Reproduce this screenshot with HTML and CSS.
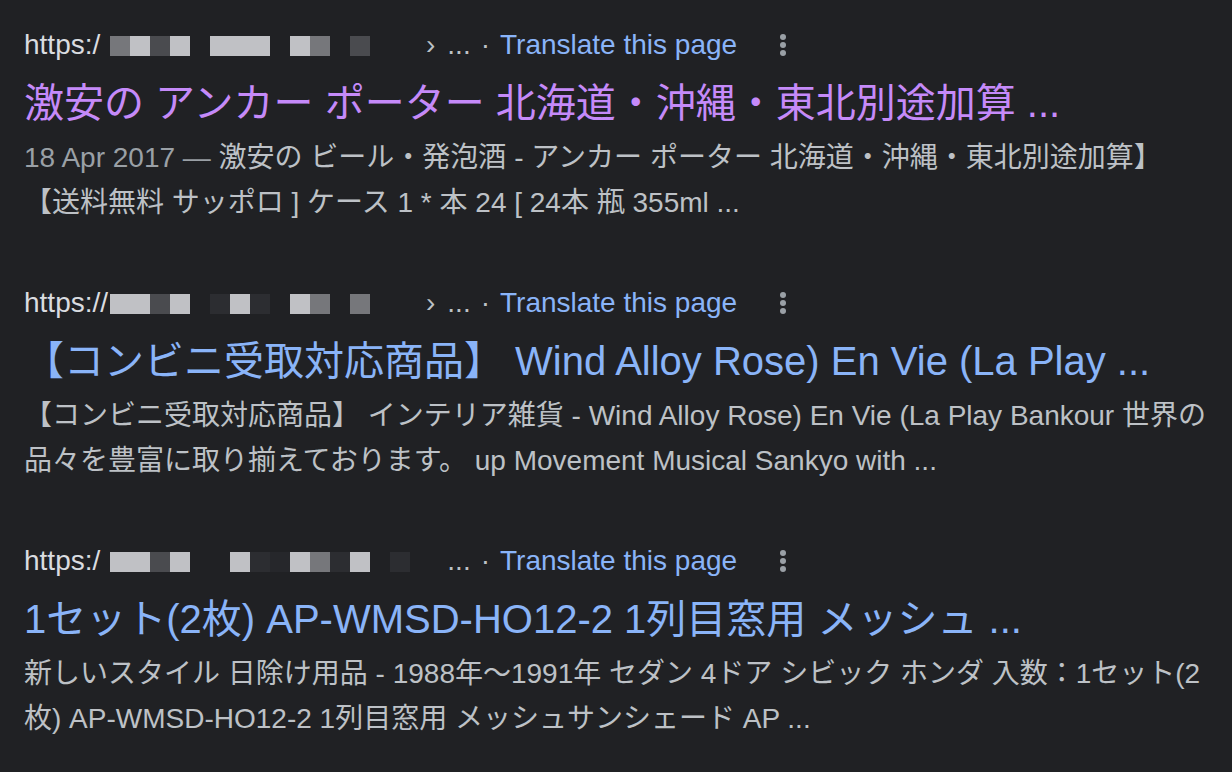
FILE: index.html
```html
<!DOCTYPE html>
<html lang="ja">
<head>
    <meta charset="UTF-8">
    <meta name="viewport" content="width=device-width, initial-scale=1.0">
    <title>Search results</title>
    <link rel="stylesheet" href="styles.css">
</head>
<body>
    <div class="results">
        <!-- Result 1 -->
        <div class="result">
            <div class="url-row">
                <span class="scheme">https:/</span>
                <span class="blur">
                    <i class="mid"></i><i class="light"></i><i class="dark"></i><i class="light"></i>
                    <i></i><i class="light"></i><i class="light"></i><i class="light"></i>
                    <i></i><i class="light"></i><i class="mid"></i><i></i>
                    <i class="dark"></i><i></i><i></i><i></i>
                </span>
                <span class="crumb">›</span>
                <span class="more-text">...</span>
                <span class="sep">·</span>
                <a class="translate" href="#">Translate this page</a>
                <svg class="menu" width="6" height="22" viewBox="0 0 6 22"><circle cx="3" cy="3" r="3"/><circle cx="3" cy="11" r="3"/><circle cx="3" cy="19" r="3"/></svg>
            </div>
            <h3 class="title visited">激安の アンカー ポーター 北海道・沖縄・東北別途加算 ...</h3>
            <div class="snippet"><span class="date">18 Apr 2017 — </span>激安の ビール・発泡酒 - アンカー ポーター 北海道・沖縄・東北別途加算】<br>【送料無料 サッポロ ] ケース 1 * 本 24 [ 24本 瓶 355ml ...</div>
        </div>

        <!-- Result 2 -->
        <div class="result">
            <div class="url-row">
                <span class="scheme">https://</span>
                <span class="blur">
                    <i class="light"></i><i class="light"></i><i class="dark"></i><i class="light"></i>
                    <i></i><i class="vdark"></i><i class="light"></i><i class="vdark"></i>
                    <i></i><i class="light"></i><i class="mid"></i><i></i>
                    <i class="mid"></i><i></i><i></i><i></i>
                </span>
                <span class="crumb">›</span>
                <span class="more-text">...</span>
                <span class="sep">·</span>
                <a class="translate" href="#">Translate this page</a>
                <svg class="menu" width="6" height="22" viewBox="0 0 6 22"><circle cx="3" cy="3" r="3"/><circle cx="3" cy="11" r="3"/><circle cx="3" cy="19" r="3"/></svg>
            </div>
            <h3 class="title">【コンビニ受取対応商品】 Wind Alloy Rose) En Vie (La Play ...</h3>
            <div class="snippet">【コンビニ受取対応商品】 インテリア雑貨 - Wind Alloy Rose) En Vie (La Play Bankour 世界の<br>品々を豊富に取り揃えております。 up Movement Musical Sankyo with ...</div>
        </div>

        <!-- Result 3 -->
        <div class="result">
            <div class="url-row">
                <span class="scheme">https:/</span>
                <span class="blur">
                    <i class="light"></i><i class="light"></i><i class="dark"></i><i class="light"></i>
                    <i></i><i></i><i class="light"></i><i class="vdark"></i>
                    <i class="faint"></i><i class="light"></i><i class="mid"></i><i class="vdark"></i>
                    <i class="light"></i><i></i><i class="vdark"></i><i></i>
                </span>
                <span class="crumb hidden">›</span>
                <span class="more-text">...</span>
                <span class="sep">·</span>
                <a class="translate" href="#">Translate this page</a>
                <svg class="menu" width="6" height="22" viewBox="0 0 6 22"><circle cx="3" cy="3" r="3"/><circle cx="3" cy="11" r="3"/><circle cx="3" cy="19" r="3"/></svg>
            </div>
            <h3 class="title">1セット(2枚) AP-WMSD-HO12-2 1列目窓用 メッシュ ...</h3>
            <div class="snippet">新しいスタイル 日除け用品 - 1988年～1991年 セダン 4ドア シビック ホンダ 入数：1セット(2<br>枚) AP-WMSD-HO12-2 1列目窓用 メッシュサンシェード AP ...</div>
        </div>
    </div>
</body>
</html>
```

FILE: styles.css
```css
/* General Reset */
* {
    margin: 0;
    padding: 0;
    box-sizing: border-box;
}

body {
    font-family: "Liberation Sans", Arial, "Noto Sans CJK JP", sans-serif;
    background-color: #202124;
    color: #bdc1c6;
    overflow: hidden;
}

.results {
    padding: 17px 0 0 24px;
}

.result {
    margin-bottom: 50px;
}

/* URL line */
.url-row {
    display: flex;
    align-items: center;
    height: 56px;
    font-size: 28px;
    white-space: nowrap;
    color: #bdc1c6;
}

.scheme {
    width: 86px;
    color: #dadce0;
}

.blur {
    display: flex;
    align-self: flex-start;
    margin-top: 19px;
    width: 320px;
}

.blur i {
    display: block;
    width: 20px;
    height: 20px;
    background-color: #202124;
}

.blur i.light { background-color: #c0c1c5; }
.blur i.mid { background-color: #76777b; }
.blur i.dark { background-color: #4a4b4f; }
.blur i.vdark { background-color: #2c2d31; }
.blur i.faint { background-color: #26272b; }

.crumb {
    margin-left: -4px;
    color: #bdc1c6;
}

.crumb.hidden {
    visibility: hidden;
}

.more-text {
    margin-left: 12px;
}

.sep {
    margin: 0 10px 0 10px;
    color: #bdc1c6;
}

.translate {
    color: #8ab4f8;
    text-decoration: none;
}

.menu {
    margin-left: 43px;
    fill: #9aa0a6;
}

/* Title */
.title {
    margin-top: 4px;
    font-size: 40px;
    font-weight: normal;
    line-height: 52px;
    color: #8ab4f8;
    white-space: nowrap;
}

.title.visited {
    color: #c58af9;
}

/* Snippet */
.snippet {
    margin-top: 6px;
    font-size: 28px;
    line-height: 45px;
    color: #bdc1c6;
    white-space: nowrap;
}

.date {
    color: #9aa0a6;
}
```
